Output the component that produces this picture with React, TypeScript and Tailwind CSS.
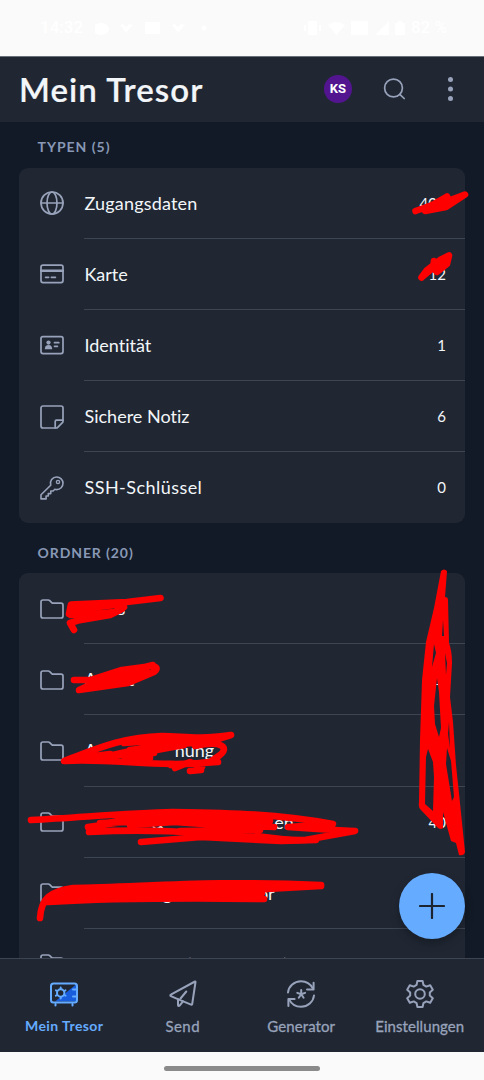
import type { ReactNode } from 'react';

const strokeProps = {
    fill: 'none',
    stroke: 'currentColor',
    strokeWidth: 1.7,
    strokeLinecap: 'round',
    strokeLinejoin: 'round',
} as const;

function Icon({ children, className = 'w-6 h-6' }: { children: ReactNode; className?: string }) {
    return (
        <svg className={`shrink-0 ${className}`} viewBox="0 0 24 24" {...strokeProps}>
            {children}
        </svg>
    );
}

const GlobeIcon = () => (
    <Icon>
        <circle cx="12" cy="12" r="11" />
        <ellipse cx="12" cy="12" rx="5" ry="11" />
        <path d="M1 12h22" />
    </Icon>
);

const CardIcon = () => (
    <Icon>
        <rect x="1" y="3.2" width="22" height="17.4" rx="2" />
        <path d="M1 8.7h22" strokeWidth="2.4" />
        <path d="M5.6 15.3h3M11.4 15.3h4" />
    </Icon>
);

const IdentityIcon = () => (
    <Icon>
        <rect x="1" y="3.6" width="22" height="17" rx="2" />
        <circle cx="8.5" cy="9.6" r="2.1" fill="currentColor" stroke="none" />
        <path d="M4.8 16.2c0-2.6 1.3-4.2 3.7-4.2s3.7 1.6 3.7 4.2z" fill="currentColor" stroke="none" />
        <path d="M14.5 9.7h4.3M14.5 13.3h2.9" />
    </Icon>
);

const NoteIcon = () => (
    <Icon>
        <path d="M3 1h18a2 2 0 0 1 2 2v13.200c0 .6-.2 1.100-.6 1.500l-4.700 4.700c-.4.4-.9.6-1.500.6H3a2 2 0 0 1-2-2V3a2 2 0 0 1 2-2z" />
        <path d="M15.200 22.800v-6.300c0-.8.500-1.300 1.300-1.300h6.300" />
    </Icon>
);

const KeyIcon = () => (
    <Icon>
        <path
            d="M16.700 1a6.300 6.300 0 0 1 6.300 6.300c0 3.500-2.800 6.300-6.300 6.300-.7 0-1.300-.1-1.900-.3l-1.700 1.700h-2.300v2.600H8.300v2.400H6.100v2.900H1v-4.200l9.700-9.500A6.300 6.300 0 0 1 16.700 1z"
            strokeWidth="1.6"
        />
        <circle cx="18" cy="6" r="1.6" strokeWidth="1.4" />
    </Icon>
);

const FolderIcon = () => (
    <Icon>
        <path d="M1 5a2 2 0 0 1 2-2h5.200c.6 0 1.100.2 1.500.6l2 2c.4.4.9.600 1.500.600H21a2 2 0 0 1 2 2v10.800a2 2 0 0 1-2 2H3a2 2 0 0 1-2-2z" />
    </Icon>
);

const VaultIcon = () => (
    <svg className="w-7 h-7" viewBox="0 0 28 28" fill="none" stroke="#65abff" strokeWidth="2" strokeLinecap="round">
        <path d="M26 4.500V21.500H5z" fill="#175ddc" stroke="none" />
        <rect x="1" y="3.500" width="26" height="19" rx="2.500" />
        <path d="M5.500 24v1.500M22.500 24v1.500" />
        <path d="M23 9.500h4M23 16.500h4" />
        <circle cx="10.700" cy="13" r="3.700" />
        <path
            d="M10.700 7.500v1.500M10.700 17v1.500M5.900 10.300l1.300.7M14.200 15l1.300.7M5.900 15.700l1.300-.7M14.200 11l1.300-.7"
            strokeWidth="1.900"
        />
    </svg>
);

const SendIcon = () => (
    <svg className="w-7 h-7" viewBox="0 0 28 28" {...strokeProps} strokeWidth="2">
        <path d="M26 1.500 1.800 14.600c-.6.3-.6 1.200.1 1.500l6.900 3 13.300 5.500c.500.200 1-.1 1.100-.6L26.500 2c.1-.5-.2-.7-.5-.5z" />
        <path d="M9 19.200v5.900c0 .9 1 1.200 1.600.5l3.400-4.200" />
        <path d="M17.300 11.500 11.500 18.500" />
    </svg>
);

const GeneratorIcon = () => (
    <svg className="w-7 h-7" viewBox="0 0 28 28" {...strokeProps} strokeWidth="2">
        <path d="M1 12.500C1.700 6.200 7.200 1.200 14 1.200c5.200 0 9.600 2.900 11.800 7.200" />
        <path d="M26.600 2.800v6.600H20" />
        <path d="M27 15.500C26.300 21.800 20.800 26.800 14 26.800c-5.200 0-9.600-2.900-11.800-7.200" />
        <path d="M1.400 26v-7h6.200" />
        <path d="M14.200 10v4.300M14.200 14.300l3.900-1.400M14.200 14.300l-3.900-1.400M14.200 14.300l2.400 3.500M14.200 14.300l-2.400 3.500" />
    </svg>
);

const SettingsIcon = () => (
    <svg className="w-7 h-7" viewBox="0 0 28 28" {...strokeProps} strokeWidth="2">
        <path d="M11.400 1h5.200l.8 3.900 2.900 1.700 3.900-1.400 2.600 4.600-3 2.600v3.200l3 2.600-2.600 4.600-3.900-1.400-2.900 1.700-.8 3.900h-5.200l-.8-3.900-2.900-1.700-3.900 1.400-2.600-4.600 3-2.600v-3.200l-3-2.600 2.600-4.600 3.900 1.400 2.900-1.700z" />
        <circle cx="14" cy="14" r="4.800" />
    </svg>
);

// What stays readable of a folder name next to the marker strokes
const piece = (text: string, className = '') => (
    <span key={text + className} className={className}>
        {text}
    </span>
);

const types = [
    { icon: <GlobeIcon />, name: 'Zugangsdaten', count: '40', nameClass: 'tracking-[0.01em]', countClass: 'mr-[9px]' },
    { icon: <CardIcon />, name: 'Karte', count: '12', nameClass: '', countClass: '' },
    { icon: <IdentityIcon />, name: 'Identität', count: '1', nameClass: '', countClass: '' },
    { icon: <NoteIcon />, name: 'Sichere Notiz', count: '6', nameClass: '', countClass: '' },
    { icon: <KeyIcon />, name: 'SSH-Schlüssel', count: '0', nameClass: 'tracking-[0.025em]', countClass: '' },
];

const folders = [
    { name: [piece('s', 'ml-[33px]')], count: '' },
    { name: [piece('A'), piece('t', 'ml-[31px]')], count: '1', countClass: 'mr-[3px]' },
    { name: [piece('A'), piece('nung', 'ml-[78px]')], count: '3' },
    { name: [piece('&', 'ml-[67px]'), piece('en', 'ml-[110px]')], count: '40' },
    { name: [piece('g', 'ml-[78px]'), piece('or', 'ml-[86px]')], count: '' },
    { name: [piece('(', 'ml-[102px]'), piece(')', 'ml-[92px]')], count: '' },
];

const tabs = [
    { label: 'Mein Tresor', icon: <VaultIcon />, style: 'text-[#65abff] font-bold text-[14px] tracking-[0.03em]' },
    { label: 'Send', icon: <SendIcon />, style: 'text-[15px] tracking-[0.03em] [-webkit-text-stroke:0.3px]' },
    { label: 'Generator', icon: <GeneratorIcon />, style: 'text-[15px] tracking-[0.005em] [-webkit-text-stroke:0.3px]' },
    { label: 'Einstellungen', icon: <SettingsIcon />, style: 'text-[15px] tracking-[0.005em] [-webkit-text-stroke:0.3px]' },
];

function Row({ icon, children, count, countClass = '' }: { icon: ReactNode; children: ReactNode; count: string; countClass?: string }) {
    return (
        <div className="group h-[71.2px] shrink-0 flex items-center pl-[20.5px] text-[#98a3bb]">
            {icon}
            <div className="ml-5 flex-1 h-full flex items-center justify-between border-b border-[#3d4553] group-last:border-transparent pr-[19px] text-[#f3f6f9]">
                <div className="flex text-[18px] leading-6 whitespace-nowrap pl-px">{children}</div>
                <span className={`text-[15px] leading-5 ${countClass}`}>{count}</span>
            </div>
        </div>
    );
}

function StatusBar() {
    return (
        <div className="h-14 shrink-0 bg-[#fafafa] text-white flex items-center justify-between pl-10 pr-[37px] font-[Roboto,sans-serif] font-medium text-[17px]">
            <div className="flex items-center gap-3">
                <span>14:32</span>
                <svg className="w-28 h-4" viewBox="0 0 112 16" fill="currentColor">
                    <ellipse cx="6" cy="9" rx="8" ry="6" />
                    <path d="M25 5l6 8 7-8-4-1-3 3-3-3zM50 2h15v12H50zM77 5l6 8 7-8-4-1-3 3-3-3z" />
                    <circle cx="109" cy="8" r="2.500" />
                </svg>
            </div>
            <div className="flex items-center gap-1">
                <svg className="w-[104px] h-4" viewBox="0 0 104 16" fill="currentColor">
                    <path d="M5 1h9v14H5zM1 5h2v6H1zM16 5h2v6h-2zM25 5q8-6 17 0l-8.500 10zM48 1h17v14H48zM72 15 86 1v14zM92 3h3V1h4v2h3v12H92z" />
                </svg>
                <span>82 %</span>
            </div>
        </div>
    );
}

function Marker() {
    return (
        <svg
            className="absolute inset-0 w-full h-full pointer-events-none"
            viewBox="0 0 484 1080"
            fill="none"
            stroke="#ff0000"
            strokeWidth="6.6"
            strokeLinecap="round"
            strokeLinejoin="round"
        >
            <path d="M415.500 211 432 205 447 196.500 434 205 425 211 446 207 465 194.500 445 202 424 209" />
            <path d="M421.500 277.500 427 270 440 260 449 255.500 447 264 437 272 433 268 434 261 438 266 445 260M421.500 277.500 434 267" />

            <path d="M160.500 598 127 602 71 604.500 69 614 98 607 124 604 122 609 110 615 78 620.500 70 623 74 630" />
            <path d="M71 606 88 605M70 612 84 609M71 615 90 614 115 612 124 607" />
            <path d="M74 680h17l31-10 30-4q8 1 2 6l-26 11-49 7 20-9 30-10 24-6M92 681l30-7M94 685l30-7 25-5M120 672l28-5" />
            <path d="M64 761c32-12 58-24 98-25 22 0 33 4 69-1l-36 11c28-6 34 2 25 9l-10 7c-46 6-98-4-146-1zM70 759l40-5M104 757l44-10 22-3" />
            <path d="M112 757l53-15 33 0M124 756l60-11M130 750l62-7M124 743l60-4" />
            <path d="M125 758l25 0M140 753l14 0" />
            <path d="M171 765l47-3M175 768l15-6 12 5M190 771l11-1" />
            <path d="M31 820c55-3 98-7 142-8 61 1 104 2 160 12l-45 3c36 3 51 3 67 4l-50 9c-66 1-112-14-216-8 14-12 50-15 87-14" />
            <path d="M88 827l56-8 60 4 70 4M130 825l60-4M140 816c50-2 90 1 130 5M141 842l60-5 80 4 35-1M180 831l80-1M100 823l60-2 100 7M190 818l75 7M220 832l70 8" />
            <path d="M40 918c1-19 10-27 33-30 73-1 135-8 248-3-56 3-125 2-160 5" />
            <path d="M48 902c68-4 135-4 216-3M50 899l60-6 152 0M56 895l50-3 155 4M62 901l100-5" />
            <path d="M321 886l-90 5-60-1-90-1M220 894h40" />

            <path
                fill="#ff0000"
                stroke="none"
                fillRule="evenodd"
                d="M441 571q3-3 6 0l-2 26q3 0 3 3l1 43q3 8 3 20l-2 34 3 25 3 43 4 38 5 49q-1 4-6 3l-3-12-5-2-8-29v16q-2 2-5 0l-17-18q-3-2-2-8l1-62 2-60 4-38 8-34zM443 620l-1 16h2zM434 644l-2 23 4-14zM445 653l1 22 1-12zM437 678l-3 28 1 18 4 13 2-9-2-36zM449 722l-1 12 2 14zM428 749l-2 8-1 47 8 7 1-34-1-15zM447 748l-1 16 6 37 2-4-3-36z"
            />
        </svg>
    );
}

export default function App() {
    return (
        <div className="relative w-full h-[1080px] flex flex-col overflow-hidden bg-[#121a27] font-[Lato,sans-serif] [font-variant-ligatures:none]">
            <StatusBar />

            <header className="h-[66px] shrink-0 bg-[#202733] border-t border-[#6b7078] flex items-center pl-[19px] pr-[31px] pb-px text-[#98a3bb]">
                <h1 className="flex-1 -mt-px text-[33px] leading-10 font-semibold tracking-[0.033em] text-[#f3f6f9] [-webkit-text-stroke:0.2px]">
                    Mein Tresor
                </h1>
                <div className="w-7 h-7 rounded-full bg-[#52158f] text-white text-[13px] font-bold font-[Roboto,sans-serif] flex items-center justify-center">
                    KS
                </div>
                <Icon className="w-6 h-6 ml-[30px]">
                    <circle cx="11.500" cy="11" r="8.900" />
                    <path d="m17.800 17.300 4.400 4.200" />
                </Icon>
                <svg className="w-[5px] h-6 ml-[42px]" viewBox="0 0 5 24" fill="currentColor">
                    <circle cx="2.500" cy="2.500" r="2.500" />
                    <circle cx="2.500" cy="12" r="2.500" />
                    <circle cx="2.500" cy="21.500" r="2.500" />
                </svg>
            </header>

            <main className="flex-1 min-h-0 overflow-hidden flex flex-col px-[19px]">
                <h2 className="h-[45.5px] shrink-0 flex items-center pt-[3px] pl-[18.5px] text-[14px] font-bold tracking-[0.07em] text-[#8898b5]">
                    TYPEN (5)
                </h2>
                <section className="shrink-0 rounded-[9px] bg-[#202733]">
                    {types.map((t) => (
                        <Row key={t.name} icon={t.icon} count={t.count} countClass={t.countClass}>
                            <span className={t.nameClass}>{t.name}</span>
                        </Row>
                    ))}
                </section>

                <h2 className="h-[49.5px] shrink-0 flex items-center pt-[9px] pl-[18.5px] text-[14px] font-bold tracking-[0.065em] text-[#8898b5]">
                    ORDNER (20)
                </h2>
                <section className="shrink-0 rounded-[9px] bg-[#202733]">
                    {folders.map((f, i) => (
                        <Row key={i} icon={<FolderIcon />} count={f.count} countClass={f.countClass}>
                            {f.name}
                        </Row>
                    ))}
                </section>
            </main>

            <nav className="h-[94px] shrink-0 bg-[#202733] border-t border-[#3d4553] flex px-[5px] pt-[21px] text-[#98a3bb]">
                {tabs.map((tab) => (
                    <button key={tab.label} className={`flex-1 flex flex-col items-center gap-2 leading-5 ${tab.style}`}>
                        {tab.icon}
                        {tab.label}
                    </button>
                ))}
            </nav>

            <div className="h-7 shrink-0 bg-[#fafafa] flex justify-center pt-[14px] pr-px">
                <div className="w-[156px] h-[5px] rounded-full bg-[#8a8a8a]" />
            </div>

            <Marker />

            <button className="absolute right-[19px] bottom-[141px] w-[66px] h-[66px] rounded-full bg-[#65abff] shadow-[0_4px_10px_rgba(0,0,0,0.3)] flex items-center justify-center text-[#1b2430]">
                <svg className="w-[26px] h-[26px]" viewBox="0 0 26 26" fill="none" stroke="currentColor" strokeWidth="2.200" strokeLinecap="round">
                    <path d="M13 1v24M1 13h24" />
                </svg>
            </button>
        </div>
    );
}
